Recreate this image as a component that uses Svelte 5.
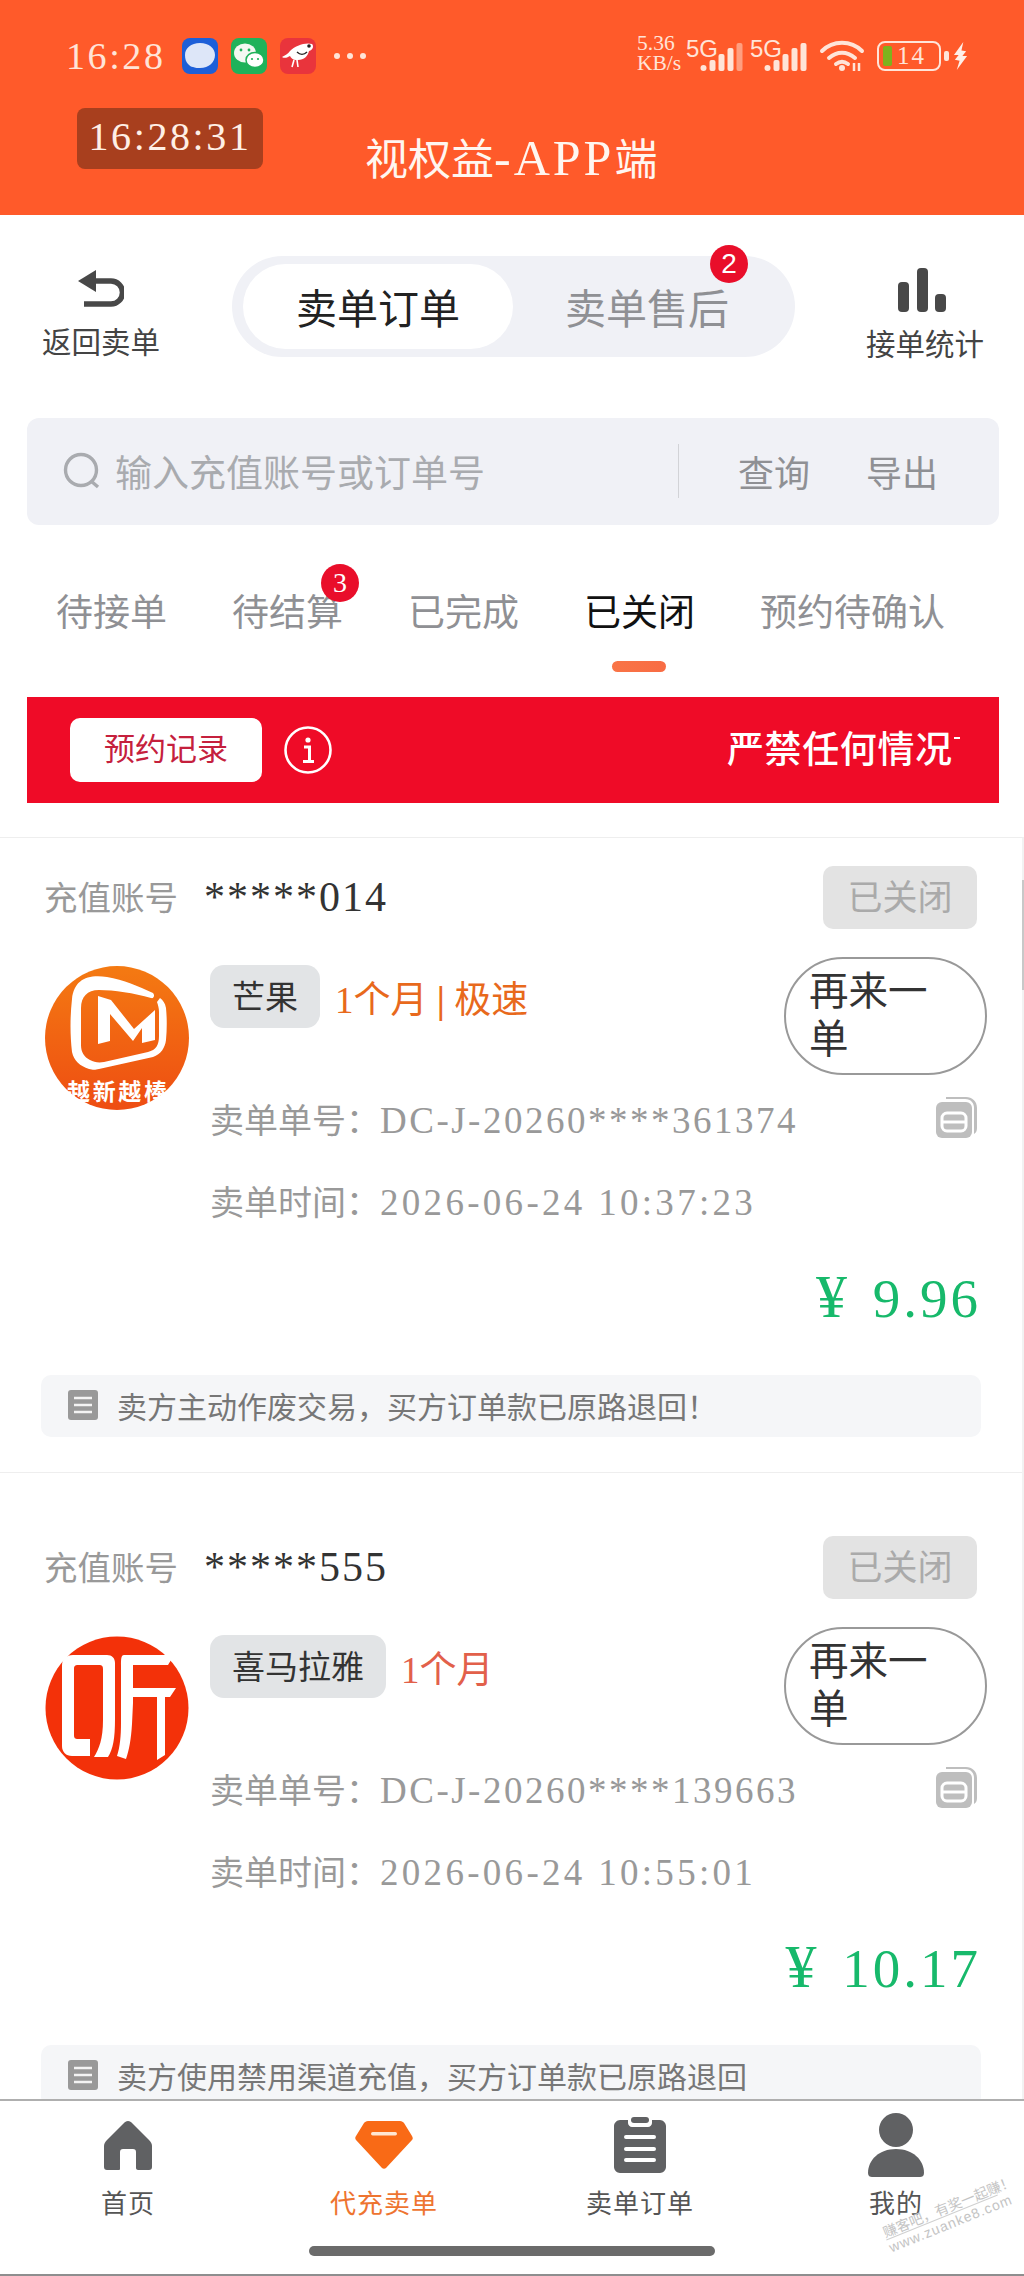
<script>
  const tabs = [
    { label: '待接单' },
    { label: '待结算', badge: '3' },
    { label: '已完成' },
    { label: '已关闭', active: true },
    { label: '预约待确认' }
  ];
  const orders = [
    { account: '*****014', brand: '芒果', logo: 'mango', spec: ['1个月 ', '|', ' 极速'], specColor: 'spec-orange', no: 'DC-J-20260****361374', time: '2026-06-24 10:37:23', price: '9.96', note: '卖方主动作废交易，买方订单款已原路退回！' },
    { account: '*****555', brand: '喜马拉雅', logo: 'xima', spec: ['1个月'], specColor: 'spec-red', no: 'DC-J-20260****139663', time: '2026-06-24 10:55:01', price: '10.17', note: '卖方使用禁用渠道充值，买方订单款已原路退回' }
  ];
  const nav = [
    { label: '首页', icon: 'home' },
    { label: '代充卖单', icon: 'gem', active: true },
    { label: '卖单订单', icon: 'clip' },
    { label: '我的', icon: 'user' }
  ];
</script>

<div class="page">
  <header class="head">
    <div class="status">
      <div class="status-left">
        <span class="clock">16:28</span>
        <svg class="app" viewBox="0 0 36 36"><rect width="36" height="36" rx="8" fill="#1D5FD8"/><path d="M18 5c9 0 15 5 15 12s-6 13-15 13c-2 0-5 0-7-1-2 0-3-1-5-3-2-2-3-5-3-9C3 10 9 5 18 5z" fill="#DDE6F8"/></svg>
        <svg class="app" viewBox="0 0 36 36"><rect width="36" height="36" rx="8" fill="#1FB25A"/><ellipse cx="14" cy="15" rx="11" ry="9.5" fill="#F3F8F2"/><ellipse cx="24" cy="22" rx="9" ry="7.5" fill="#fff" stroke="#1FB25A" stroke-width="1.5"/><circle cx="10" cy="12" r="1.4" fill="#1FB25A"/><circle cx="18" cy="12" r="1.4" fill="#1FB25A"/><circle cx="21" cy="21" r="1.1" fill="#1FB25A"/><circle cx="27" cy="21" r="1.1" fill="#1FB25A"/></svg>
        <svg class="app" viewBox="0 0 36 36"><rect width="36" height="36" rx="8" fill="#E9343C"/><path d="M2 19c3-2 6-3 8-6 5-5 15-9 22-7 2 2 1 6-3 7-1 5-5 9-11 9l-2 0c-3 0-5-2-6-4-2 1-5 3-8 1z" fill="#fff"/><path d="M14 22l-2 7m5-7l1 7" stroke="#fff" stroke-width="1.6"/><circle cx="29" cy="8" r="1.8" fill="#222"/><path d="M17 14c3 3 7 3 10 0" stroke="#222" stroke-width="1.4" fill="none"/></svg>
        <span class="more"><i></i><i></i><i></i></span>
      </div>
      <div class="status-right">
        <span class="speed">5.36<br />KB/s</span>
        <span class="sim">
          <span class="g">5G</span>
          <svg viewBox="0 0 42 28" class="bars"><rect x="0" y="22" width="6" height="6" rx="3" fill="#FFE4D8"/><rect x="9" y="17" width="6" height="11" rx="2" fill="#FFE4D8"/><rect x="18" y="11" width="6" height="17" rx="2" fill="#FFE4D8"/><rect x="27" y="5" width="6" height="23" rx="2" fill="#FFE4D8"/><rect x="36" y="0" width="6" height="28" rx="2" fill="#FF9F80"/></svg>
        </span>
        <span class="sim">
          <span class="g">5G</span>
          <svg viewBox="0 0 42 28" class="bars"><rect x="0" y="22" width="6" height="6" rx="3" fill="#FFE4D8"/><rect x="9" y="17" width="6" height="11" rx="2" fill="#FFE4D8"/><rect x="18" y="11" width="6" height="17" rx="2" fill="#FFE4D8"/><rect x="27" y="5" width="6" height="23" rx="2" fill="#FFE4D8"/><rect x="36" y="0" width="6" height="28" rx="2" fill="#FFE4D8"/></svg>
        </span>
        <svg class="wifi" viewBox="0 0 44 32"><path d="M2 12C13 1 31 1 42 12M9 19c8-7 18-7 26 0M16 25c4-3 8-3 12 0" fill="none" stroke="#FFE4D8" stroke-width="4" stroke-linecap="round"/><circle cx="22" cy="29" r="3" fill="#FFE4D8"/><path d="M34 24v8M39 24v8" stroke="#FFE4D8" stroke-width="2.5"/></svg>
        <span class="battery"><i class="level"></i><span>14</span></span>
        <i class="nub"></i>
        <svg class="bolt" viewBox="0 0 16 30"><path d="M11 0L1 14h5L2 19l5 1-3 10 11-15h-5l4-5-5-1z" fill="#FFEFE8"/></svg>
      </div>
    </div>
    <div class="titlebar">
      <span class="timer">16:28:31</span>
      <span class="title">视权益<span class="title-latin">-APP</span>端</span>
    </div>
  </header>

  <section class="topbar">
    <div class="side">
      <svg class="back-ico" viewBox="0 0 46 40"><path d="M0 11L18 0v22z" fill="#484848"/><path d="M14 11h19a10 10 0 0 1 0 23H6" fill="none" stroke="#484848" stroke-width="5.5"/></svg>
      <span>返回卖单</span>
    </div>
    <div class="switch">
      <span class="sw on">卖单订单</span>
      <span class="sw off">卖单售后<b class="badge b2">2</b></span>
    </div>
    <div class="side stats">
      <svg class="stat-ico" viewBox="0 0 49 44"><rect x="0" y="14" width="11" height="30" rx="4" fill="#484848"/><rect x="19" y="0" width="11" height="44" rx="4" fill="#484848"/><rect x="37" y="26" width="11" height="18" rx="4" fill="#484848"/></svg>
      <span>接单统计</span>
    </div>
  </section>

  <section class="search">
    <svg class="lens" viewBox="0 0 38 38"><circle cx="18" cy="18" r="15.5" fill="none" stroke="#A9ABAF" stroke-width="3.4"/><path d="M28 29l7 6" stroke="#A9ABAF" stroke-width="3.4"/></svg>
    <span class="ph">输入充值账号或订单号</span>
    <i class="vr"></i>
    <span class="act q">查询</span>
    <span class="act">导出</span>
  </section>

  <nav class="tabs">
    {#each tabs as t}
      <span class="tab" class:active={t.active}>
        {t.label}
        {#if t.badge}<b class="badge b3">{t.badge}</b>{/if}
        {#if t.active}<i class="underline"></i>{/if}
      </span>
    {/each}
  </nav>

  <section class="banner">
    <span class="rec">预约记录</span>
    <svg class="info" viewBox="0 0 48 48"><circle cx="24" cy="24" r="22.5" fill="none" stroke="#fff" stroke-width="2.6"/><circle cx="24" cy="14" r="2.6" fill="#fff"/><path d="M20 21h5.5v14M19 35.5h11" fill="none" stroke="#fff" stroke-width="3"/></svg>
    <span class="marquee">严禁任何情况<i></i></span>
  </section>

  <main class="list">
    {#each orders as o}
      <article class="card">
        <div class="row-top">
          <span class="acc-label">充值账号</span>
          <span class="acc">{o.account}</span>
          <span class="state">已关闭</span>
        </div>
        <div class="row-main">
          <div class="logo">
            {#if o.logo === 'mango'}
              <svg viewBox="0 0 144 144">
                <defs><linearGradient id="mg" x1="0" y1="0" x2="0" y2="1"><stop offset="0" stop-color="#F47A12"/><stop offset="1" stop-color="#EE4D12"/></linearGradient></defs>
                <circle cx="72" cy="72" r="72" fill="url(#mg)"/>
                <path d="M62 11c-20-3-33 3-35 22-2 18-2 36 0 53 2 9 8 14 17 17 4 1 6 1 10 0l54-12c8-3 12-9 13-17 1-11 1-22 0-32-1-5-3-8-6-10l-3 4c1 3 2 6 2 10v24c0 9-3 14-11 16l-44 10c-6 1-10 0-14-2-6-3-9-8-9-15V42c0-11 6-18 18-18 15 0 35 3 52 8 3 1 4-3 2-5-15-7-29-13-46-16z" fill="#fff"/>
                <path d="M53 78V30L66 34 89 63 110 44V74L97 77V62L88 75 65 48V75z" fill="#fff"/>
                <text x="72" y="134" text-anchor="middle" class="logo-txt" textLength="100">越新越棒</text>
              </svg>
            {:else}
              <svg viewBox="0 0 144 144">
                <circle cx="72" cy="72" r="71.5" fill="#F33109"/>
                <path d="M28 19h34c5 0 8 3 8 8v56c0 20-2 30-7 38H49c5-8 9-18 9-37V33c0-3-1-4-4-4H33c-3 0-4 1-4 4v66c0 3 1 4 4 4h12v17H27c-6 0-10-4-10-10V30c0-7 4-11 11-11z" fill="#fff"/>
                <path d="M79 19h50l-6 10H88v38l-1 21c-1 16-3 26-6 35l-9-3c3-9 4-20 4-33V30c0-7 0-11 3-11zM88 52h43l-6 9h-5v58l-8 5V61H88z" fill="#fff"/>
              </svg>
            {/if}
          </div>
          <div class="detail">
            <div class="head-row">
              <span class="brand">{o.brand}</span>
              <span class="spec {o.specColor}">{#each o.spec as part}{#if part === '|'}<b class="pipe">{part}</b>{:else}{part}{/if}{/each}</span>
              <span class="again"><span>再来一单</span></span>
            </div>
            <div class="line no">
              <span class="k">卖单单号：</span><span class="v">{o.no}</span>
              <svg class="copy" viewBox="0 0 42 44"><path d="M10 3h20c6 0 11 4 11 11v20c0 3-1 5-3 6V14c0-5-3-9-9-9H10z" fill="#BEBEBE"/><rect x="0" y="8" width="36" height="36" rx="6" fill="#BEBEBE"/><rect x="6" y="19" width="24" height="18" rx="5" fill="none" stroke="#fff" stroke-width="3"/><path d="M6 28h24" stroke="#fff" stroke-width="3"/></svg>
            </div>
            <div class="line"><span class="k">卖单时间：</span><span class="v t">{o.time}</span></div>
          </div>
        </div>
        <div class="price"><span class="yen">¥</span> {o.price}</div>
        <div class="note">
          <svg class="note-ico" viewBox="0 0 30 30"><rect width="30" height="30" rx="3" fill="#999"/><path d="M6 8h18M6 15h18M6 22h18" stroke="#F3F3F3" stroke-width="2.6"/></svg>
          <span>{o.note}</span>
        </div>
      </article>
    {/each}
  </main>

  <i class="scroll"></i>

  <footer class="nav">
    {#each nav as n}
      <div class="nav-item" class:active={n.active}>
        <span class="nav-ico">
          {#if n.icon === 'home'}
            <svg viewBox="0 0 48 50" width="48" height="50"><path d="M24 1c2 0 3 1 4 2l17 17c2 2 3 4 3 6v21c0 2-1 3-3 3H34c-1 0-2-1-2-2V32c0-2-1-3-3-3H19c-2 0-3 1-3 3v17c0 1-1 1-2 1H3c-2 0-3-1-3-3V26c0-2 1-4 3-6L20 3c1-1 2-2 4-2z" fill="#606163"/></svg>
          {:else if n.icon === 'gem'}
            <svg viewBox="0 0 58 48" width="58" height="48"><path d="M13 0h32c2 0 3 1 4 2l8 13c1 2 1 3 0 4L31 47c-1 1-3 1-4 0L1 19c-1-1-1-3 0-4L9 2c1-1 2-2 4-2z" fill="#F96A16"/><rect x="16" y="11" width="26" height="3.5" rx="1.7" fill="#FFE6D2"/></svg>
          {:else if n.icon === 'clip'}
            <svg viewBox="0 0 52 56" width="52" height="56"><path d="M6 3h8v3c0 2 2 4 4 4h16c2 0 4-2 4-4V3h8c3 0 6 3 6 6v41c0 3-3 6-6 6H6c-3 0-6-3-6-6V9c0-3 3-6 6-6z" fill="#606163"/><rect x="17" y="0" width="18" height="6" rx="3" fill="#606163"/><path d="M12 20h28M12 32h28M12 43h28" stroke="#fff" stroke-width="4" stroke-linecap="round"/></svg>
          {:else}
            <svg viewBox="0 0 56 64" width="56" height="64"><circle cx="28" cy="17" r="17" fill="#606163"/><path d="M28 36c17 0 28 11 28 24 0 3-2 4-4 4H4c-2 0-4-1-4-4 0-13 11-24 28-24z" fill="#606163"/></svg>
          {/if}
        </span>
        <span class="nav-label">{n.label}</span>
      </div>
    {/each}
    <i class="homebar"></i>
    <div class="wm"><span>赚客吧，有奖一起赚！</span><span class="wm2">www.zuanke8.com</span></div>
  </footer>
</div>

<style>
  :global(body) { margin: 0; background: #fff; }
  .page {
    position: relative;
    width: 1024px;
    height: 2276px;
    overflow: hidden;
    background: #fff;
    display: flex;
    flex-direction: column;
    font-family: "Liberation Serif", "Noto Sans CJK SC", serif;
    color: #333;
  }
  i { display: block; font-style: normal; }

  .head { height: 215px; background: #FF5A2A; color: #fff; flex: none; box-sizing: border-box; padding-top: 36px; }
  .status { display: flex; justify-content: space-between; align-items: flex-start; height: 40px; padding: 0 56px 0 66px; }
  .status-left { display: flex; align-items: center; gap: 13px; height: 40px; }
  .clock { font-size: 38px; letter-spacing: 2.6px; color: #FFE4D8; margin-right: 3px; }
  .app { width: 36px; height: 36px; flex: none; }
  .more { display: flex; gap: 7px; margin-left: 5px; }
  .more i { width: 6px; height: 6px; border-radius: 50%; background: #FFE4D8; }
  .status-right { display: flex; align-items: flex-end; height: 33px; color: #FFE4D8; margin-top: 2px; }
  .speed { font-size: 21.5px; line-height: 20px; width: 48px; margin-bottom: -2px; white-space: nowrap; }
  .sim { display: block; width: 64px; position: relative; height: 32px; flex: none; }
  .g { font-family: "Liberation Sans", sans-serif; font-size: 24px; line-height: 27px; position: absolute; left: 1px; top: -4px; }
  .bars { position: absolute; left: 15px; bottom: 0; width: 43px; height: 28px; }
  .wifi { width: 46px; height: 32px; margin-left: 6px; flex: none; }
  .battery { width: 60px; height: 26px; margin: 0 0 0 12px; border: 2px solid #FFE4D8; border-radius: 8px; display: flex; align-items: center; font-size: 25px; flex: none; }
  .battery .level { width: 9px; height: 20px; margin-left: 4px; background: #7DB21E; border-radius: 2px; flex: none; }
  .battery span { margin-left: 5px; letter-spacing: 2px; }
  .nub { width: 5px; height: 10px; background: #FFE4D8; border-radius: 2px; margin: 0 0 10px 3px; flex: none; }
  .bolt { width: 15px; height: 30px; margin-left: 4px; flex: none; }

  .titlebar { display: flex; align-items: flex-start; padding: 32px 0 0 77px; }
  .timer { width: 186px; height: 61px; border-radius: 8px; background: #A83F1E; color: #FFEFE6; font-size: 40px; line-height: 58px; text-align: center; letter-spacing: 2.6px; }
  .title { font-size: 43px; line-height: 48px; margin: 26px 0 0 102px; color: #FFF6F0; white-space: nowrap; }
  .title-latin { font-size: 50px; letter-spacing: 3px; }

  .topbar { height: 203px; flex: none; display: flex; align-items: flex-start; position: relative; }
  .side { width: 118px; margin-left: 42px; padding-top: 55px; display: flex; flex-direction: column; align-items: center; font-size: 29.5px; color: #444; white-space: nowrap; line-height: 36px; flex: none; }
  .back-ico { width: 46px; height: 40px; margin-bottom: 15px; }
  .stats { margin-left: 71px; padding-top: 53px; }
  .stat-ico { width: 49px; height: 44px; margin-bottom: 15px; transform: translateX(-3px); }
  .switch { margin: 41px 0 0 72px; width: 563px; height: 101px; border-radius: 51px; background: #F0F1F6; display: flex; align-items: center; box-sizing: border-box; padding-left: 11px; flex: none; }
  .sw { font-size: 41px; display: flex; align-items: center; justify-content: center; height: 85px; position: relative; white-space: nowrap; padding-bottom: 2px; box-sizing: border-box; }
  .on { width: 270px; background: #fff; border-radius: 43px; color: #222; }
  .off { width: 268px; color: #8F9094; }
  .badge { position: absolute; border-radius: 50%; background: #E90E2A; color: #fff; font: 400 28px/38px "Liberation Sans", sans-serif; width: 38px; height: 38px; text-align: center; }
  .b2 { left: 197px; top: -19px; }
  .b3 { right: -16px; top: -26px; font-family: "Liberation Serif", serif; }

  .search { margin: 0 25px 0 27px; height: 107px; flex: none; background: #F0F1F6; border-radius: 12px; display: flex; align-items: center; box-sizing: border-box; padding: 0 0 2px 36px; }
  .lens { width: 38px; height: 38px; flex: none; }
  .ph { font-size: 37px; color: #A9ABAF; margin-left: 14px; white-space: nowrap; width: 563px; }
  .vr { width: 1px; height: 54px; background: #D2D3D7; flex: none; }
  .act { font-size: 36px; color: #8F9094; margin-left: 56px; white-space: nowrap; }
  .q { margin-left: 59px; }

  .tabs { height: 172px; flex: none; position: relative; box-sizing: border-box; padding: 65px 0 0 56px; display: flex; gap: 65px; }
  .tab { font-size: 37px; line-height: 48px; color: #8F9094; position: relative; white-space: nowrap; height: 48px; }
  .tab.active { color: #111; }
  .underline { position: absolute; left: 28px; top: 71px; width: 54px; height: 11px; border-radius: 6px; background: linear-gradient(90deg, #F97446, #F86C44); }

  .banner { margin: 0 25px 0 27px; height: 106px; flex: none; background: #EF0B27; display: flex; align-items: center; position: relative; padding-left: 43px; }
  .rec { width: 192px; height: 64px; background: #fff; border-radius: 10px; text-align: center; font-size: 31px; line-height: 63px; color: #C5203D; flex: none; }
  .info { width: 48px; height: 48px; margin-left: 22px; flex: none; }
  .marquee { position: absolute; left: 700px; top: 30px; color: #fff; font-size: 37px; line-height: 48px; letter-spacing: .6px; white-space: nowrap; font-weight: 500; }
  .marquee i { position: absolute; right: -7px; top: 10px; width: 6px; height: 2px; background: #fff; }

  .list { flex: 1; margin-top: 34px; border-top: 1px solid #EEE; min-height: 0; border-right: 2px solid #F2F2F2; }
  .card { height: 635px; box-sizing: border-box; border-bottom: 1px solid #EEE; padding: 28px 0 0; margin-bottom: 35px; position: relative; }
  .row-top { display: flex; align-items: flex-start; padding: 0 44px; height: 63px; }
  .acc-label { font-size: 33.5px; line-height: 66px; color: #999; width: 160px; white-space: nowrap; }
  .acc { font-size: 42px; line-height: 62px; color: #333; letter-spacing: 2px; white-space: nowrap; }
  .state { margin-left: auto; margin-right: 1px; width: 154px; height: 63px; border-radius: 10px; background: #E3E3E3; color: #AAA; text-align: center; font-size: 35px; line-height: 66px; }
  .row-main { display: flex; padding: 36px 0 0 45px; }
  .logo { width: 144px; height: 144px; flex: none; margin-top: 1px; }
  .logo svg { display: block; width: 144px; height: 144px; }
  .logo-txt { font-size: 23px; font-family: "Noto Sans CJK SC", sans-serif; fill: #fff; font-weight: 700; }
  .detail { flex: 1; padding-left: 21px; min-width: 0; }
  .head-row { display: flex; align-items: flex-start; position: relative; height: 130px; }
  .brand { height: 63px; box-sizing: border-box; padding: 0 22px; background: #E2E4E6; border-radius: 14px; color: #333; font-size: 33px; line-height: 66px; white-space: nowrap; }
  .spec { font-size: 37px; line-height: 71px; margin-left: 15px; white-space: pre; }
  .pipe { font-weight: 700; }
  .spec-orange { color: #E8691C; }
  .spec-red { color: #E2604A; }
  .again { position: absolute; right: 35px; top: -8px; width: 203px; height: 118px; box-sizing: border-box; border: 2px solid #999; border-radius: 59px; padding: 9px 23px; font-size: 39.5px; line-height: 48px; color: #333; }
  .again span { display: block; width: 130px; }
  .line { line-height: 48px; color: #999; white-space: nowrap; height: 48px; margin-top: 34px; display: flex; align-items: baseline; }
  .k { font-size: 34px; width: 170px; flex: none; }
  .v { font-size: 37px; letter-spacing: 2.5px; }
  .t { letter-spacing: 3.3px; }
  .no { margin-top: 2px; position: relative; }
  .copy { position: absolute; left: 726px; top: -3px; width: 42px; height: 44px; }
  .price { text-align: right; padding-right: 41px; margin-top: 39px; font-size: 55px; line-height: 60px; color: #17B96B; letter-spacing: 3px; white-space: nowrap; }
  .yen { margin-right: 6px; font-size: 62px; line-height: 60px; }
  .note { position: absolute; left: 41px; right: 41px; top: 537px; height: 62px; box-sizing: border-box; padding: 0 0 3px 27px; background: #F5F6F8; border-radius: 10px; display: flex; align-items: center; font-size: 30px; color: #777; white-space: nowrap; }
  .note-ico { width: 30px; height: 30px; margin-right: 19px; flex: none; }

  .scroll { position: absolute; right: 0; top: 880px; width: 2px; height: 110px; background: #C8C8C8; }

  .nav { position: absolute; left: 0; right: 0; top: 2099px; height: 177px; box-sizing: border-box; background: #fff; border-top: 2px solid #AFAFAF; border-bottom: 2px solid #8E8E8E; display: grid; grid-template-columns: repeat(4, 1fr); }
  .nav-item { display: flex; flex-direction: column; align-items: center; color: #555; padding-top: 12px; }
  .nav-item.active { color: #EE7430; }
  .nav-ico { height: 64px; display: flex; align-items: center; justify-content: center; margin-bottom: 11px; }
  .nav-label { font-size: 26px; line-height: 34px; white-space: nowrap; letter-spacing: 1px; }
  .homebar { position: absolute; left: 309px; top: 145px; width: 406px; height: 10px; border-radius: 5px; background: #6B6B6B; }
  .wm { position: absolute; right: 22px; top: 100px; width: 120px; transform: rotate(-22deg); color: #C4C4C4; font: 14px/16px "Noto Sans CJK SC", sans-serif; white-space: nowrap; }
  .wm span { display: block; border-bottom: 1px solid #D0D0D0; }
  .wm .wm2 { font-family: "Liberation Sans", sans-serif; border: 0; letter-spacing: 1px; }
</style>
